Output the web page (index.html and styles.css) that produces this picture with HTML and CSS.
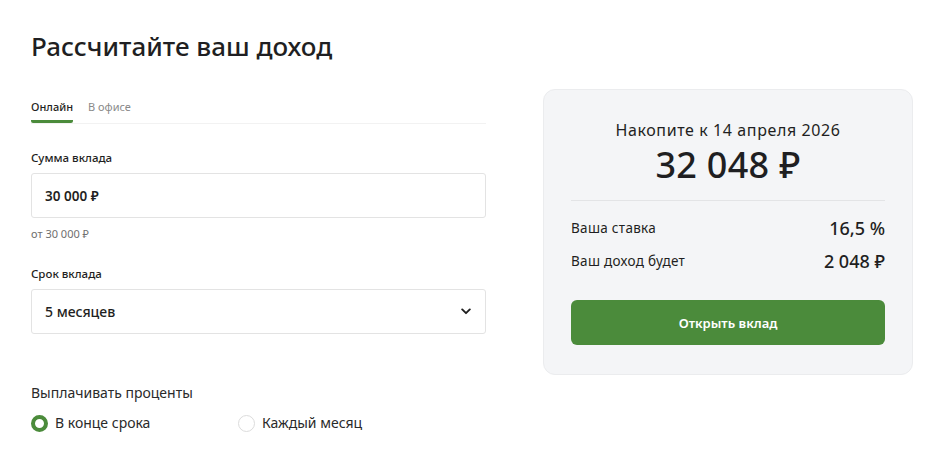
FILE: index.html
```html
<!DOCTYPE html>
<html lang="ru">
<head>
<meta charset="utf-8">
<title>Рассчитайте ваш доход</title>
<link rel="stylesheet" href="styles.css">
</head>
<body>
<div class="page">
  <h1 class="title">Рассчитайте ваш доход</h1>
  <div class="layout">
    <div class="form">
      <div class="tabs">
        <div class="tab tab-active">Онлайн</div>
        <div class="tab">В офисе</div>
      </div>
      <div class="field">
        <div class="label">Сумма вклада</div>
        <div class="input"><span class="input-value">30 000 ₽</span></div>
        <div class="hint">от 30 000 ₽</div>
      </div>
      <div class="field field-term">
        <div class="label">Срок вклада</div>
        <div class="input select">
          <span class="select-value">5 месяцев</span>
          <svg class="chevron" width="10" height="7" viewBox="0 0 10 7"><path d="M1.2 1.4 L5 5.2 L8.8 1.4" fill="none" stroke="#1f1f1f" stroke-width="1.9" stroke-linecap="round" stroke-linejoin="round"/></svg>
        </div>
      </div>
      <div class="payout">
        <div class="payout-title">Выплачивать проценты</div>
        <div class="radios">
          <label class="radio"><span class="dot dot-on"></span>В конце срока</label>
          <label class="radio"><span class="dot"></span>Каждый месяц</label>
        </div>
      </div>
    </div>
    <div class="card">
      <div class="card-caption">Накопите к 14 апреля 2026</div>
      <div class="card-total">32 048 ₽</div>
      <div class="card-divider"></div>
      <div class="rows">
        <div class="row"><span class="row-label">Ваша ставка</span><span class="row-value">16,5 %</span></div>
        <div class="row"><span class="row-label">Ваш доход будет</span><span class="row-value">2 048 ₽</span></div>
      </div>
      <button class="btn">Открыть вклад</button>
    </div>
  </div>
</div>
</body>
</html>
```

FILE: styles.css
```css
* { box-sizing: border-box; }
html, body { margin: 0; padding: 0; background: #fff; }
body {
  font-family: "Noto Sans", "Open Sans", sans-serif;
  color: #1f1f22;
}
.page { padding: 28px 0 0 31px; width: 941px; }
.title {
  margin: 0;
  font-size: 26px;
  font-weight: 500;
  line-height: 36px;
  letter-spacing: 0;
  color: #1f1f22;
}
.layout {
  display: flex;
  align-items: flex-start;
  gap: 57px;
  margin-top: 25px;
}
.form { width: 455px; }
.tabs {
  display: flex;
  gap: 15px;
  border-bottom: 1px solid #f2f2f2;
  height: 35px;
}
.tab {
  font-size: 11px;
  line-height: 17px;
  padding-top: 9px;
  color: #8a8a8a;
  height: 34px;
}
.tab-active {
  color: #1f1f22;
  font-weight: 500;
  border-bottom: 3px solid #4b8b3b;
  border-radius: 2px;
}
.field { margin-top: 26px; }
.label {
  font-size: 11.5px;
  line-height: 16px;
  color: #1f1f22;
  font-weight: 500;
}
.input {
  margin-top: 7px;
  height: 45px;
  border: 1px solid #e3e3e3;
  border-radius: 3px;
  display: flex;
  align-items: center;
  padding: 0 14px 0 13px;
}
.input-value { font-size: 13.5px; font-weight: 600; }
.hint {
  margin-top: 8px;
  font-size: 11px;
  color: #6f6f6f;
  line-height: 15px;
}
.field-term { margin-top: 25px; }
.select { justify-content: space-between; width: 455px; }
.select-value { font-size: 14px; font-weight: 500; }
.payout { margin-top: 49px; }
.payout-title {
  font-size: 14px;
  line-height: 20px;
  color: #2a2a2a;
}
.radios {
  display: flex;
  margin-top: 10px;
}
.radio {
  display: flex;
  align-items: center;
  gap: 7px;
  font-size: 14px;
  color: #2a2a2a;
  line-height: 20px;
}
.radio:first-child { width: 207px; }
.dot {
  width: 17px;
  height: 17px;
  border-radius: 50%;
  border: 1px solid #dcdcdc;
  background: #fff;
}
.dot-on { border: 4.5px solid #4b8b3b; }
.card {
  width: 370px;
  height: 286px;
  background: #f4f5f7;
  border: 1px solid #ebecee;
  border-radius: 12px;
  padding: 29px 27px 0 27px;
  display: flex;
  flex-direction: column;
}
.card-caption {
  text-align: center;
  font-size: 16px;
  line-height: 22px;
  letter-spacing: 0.6px;
  color: #1f1f22;
}
.card-total {
  text-align: center;
  font-size: 36px;
  line-height: 40px;
  font-weight: 500;
  letter-spacing: 0.3px;
  margin-top: 4px;
  color: #1f1f22;
}
.card-divider {
  height: 1px;
  background: #e3e4e6;
  margin-top: 15px;
}
.rows {
  display: flex;
  flex-direction: column;
  margin-top: 10px;
}
.row {
  display: flex;
  justify-content: space-between;
  align-items: center;
  height: 33px;
}
.row-label { font-size: 13.5px; letter-spacing: 0.3px; color: #1f1f22; }
.row-value { font-size: 18px; font-weight: 500; color: #1f1f22; }
.btn {
  margin-top: 23px;
  height: 45px;
  border: none;
  border-radius: 6px;
  background: #4b8b3b;
  color: #fff;
  font-family: "Noto Sans", "Open Sans", sans-serif;
  font-size: 13px;
  font-weight: 600;
  cursor: pointer;
}
```
